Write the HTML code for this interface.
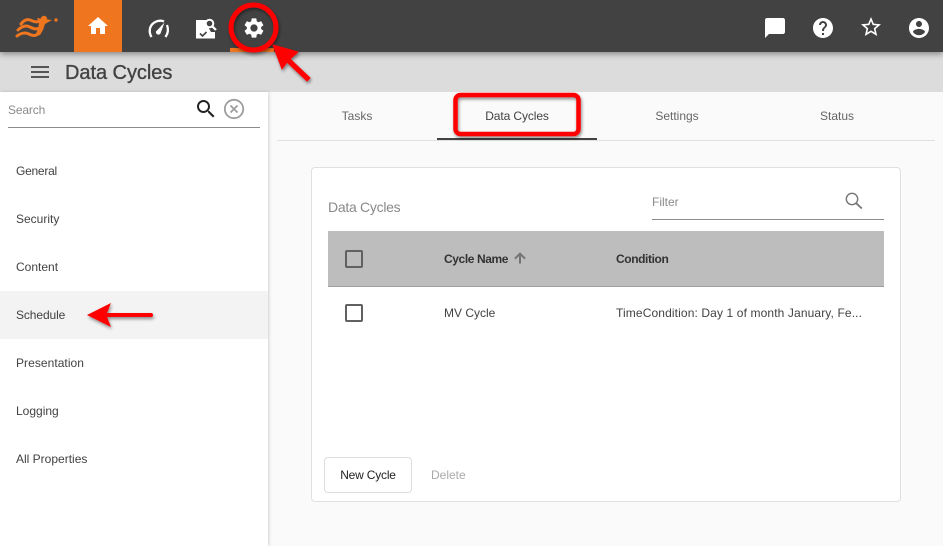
<!DOCTYPE html>
<html><head><meta charset="utf-8"><style>
html,body{margin:0;padding:0}
body{width:943px;height:546px;position:relative;overflow:hidden;background:#fafafa;font-family:"Liberation Sans",sans-serif;font-size:12px;color:#424242}
.a{position:absolute}
.t{position:absolute;white-space:nowrap;line-height:16px}
svg.a{overflow:visible}
</style></head><body>
<div class="a" style="left:0;top:52px;width:943px;height:40px;background:#dcdcdc"></div>
<div class="a" style="left:0;top:92px;width:268px;height:454px;background:#fff;box-shadow:1px 0 3px rgba(0,0,0,.16)"></div>
<div class="a" style="left:0;top:291px;width:268px;height:48px;background:#f3f3f3"></div>
<div class="a" style="left:0;top:0;width:943px;height:52px;background:#424242;box-shadow:0 2px 6px rgba(0,0,0,.4)"></div>
<div class="a" style="left:74px;top:0;width:48px;height:52px;background:#ef751f"></div>
<div class="a" style="left:230px;top:48px;width:44px;height:4px;background:#ef751f"></div>

<svg class="a" style="left:0;top:0" width="70" height="44" viewBox="0 0 70 44"><g fill="none" stroke="#ef751f" stroke-width="3" stroke-linecap="round"><path d="M21 24c3-4 6-5 9-4s6 3 10 1"/><path d="M18 30c4-4 8-5 12-3s7 3 11 0"/><path d="M17 36c4-3 8-4 12-2s6 2 9 0"/></g><path d="M37 18l6 1 9 1-7 4-2 6-3 5-5 1 3-7 1-6z" fill="#ef751f"/><circle cx="44" cy="19" r="3.200" fill="#ef751f"/><circle cx="56" cy="20" r="1.700" fill="#ef751f"/></svg>

<svg class="a" style="left:86px;top:14px" width="24" height="24" viewBox="0 0 24 24" fill="#fff"><path d="M10 20v-6h4v6h5v-8h3L12 3 2 12h3v8z"/></svg>
<svg class="a" style="left:146px;top:16px" width="24" height="24" viewBox="0 0 24 24"><path d="M5.500 21C3 17 3 11.500 6.500 8S15 4 18 5.500" fill="none" stroke="#fff" stroke-width="2.300"/><path d="M21 9c1.500 4 1 8.500-1.500 12" fill="none" stroke="#fff" stroke-width="2.300"/><path d="M18.500 6.500L14.500 17.500a2.500 2.500 0 0 1-4.500-2z" fill="#fff"/></svg>
<svg class="a" style="left:195px;top:18px" width="22" height="22" viewBox="0 0 22 22"><path d="M1 2h11v5l4 7 4 0v6.500H1z" fill="#fff"/><circle cx="14.500" cy="5.500" r="3.800" fill="#424242" stroke="#fff" stroke-width="2"/><path d="M17.300 8.300l3.700 3.700" stroke="#fff" stroke-width="2.200"/><path d="M5 15.500l2.500 2.500 4-4" fill="none" stroke="#424242" stroke-width="1.600"/></svg>
<svg class="a" style="left:242px;top:16px" width="24" height="24" viewBox="0 0 24 24" fill="#fff"><path d="M19.140 12.940c.04-.3.06-.61.06-.94 0-.32-.02-.64-.07-.94l2.030-1.580c.18-.14.230-.41.120-.61l-1.920-3.320c-.12-.22-.37-.29-.59-.22l-2.390.96c-.5-.38-1.030-.7-1.620-.94l-.36-2.540c-.04-.24-.24-.41-.48-.41h-3.840c-.24 0-.43.170-.47.410l-.36 2.540c-.59.24-1.130.57-1.620.94l-2.390-.96c-.22-.08-.47 0-.59.220L2.740 8.870c-.12.210-.08.470.120.610l2.030 1.580c-.05.3-.09.630-.09.940s.02.640.07.940l-2.030 1.580c-.18.140-.23.410-.12.610l1.920 3.320c.12.220.37.290.59.220l2.390-.96c.5.380 1.030.7 1.620.94l.36 2.540c.05.240.24.410.48.410h3.840c.24 0 .44-.17.47-.41l.36-2.540c.59-.24 1.130-.56 1.620-.94l2.390.96c.22.080.47 0 .59-.22l1.920-3.320c.12-.22.070-.47-.12-.61l-2.010-1.580zM12 15.600c-1.980 0-3.600-1.620-3.600-3.600s1.620-3.600 3.600-3.600 3.600 1.620 3.600 3.600-1.620 3.600-3.600 3.600z"/></svg>

<svg class="a" style="left:763px;top:16px" width="24" height="24" viewBox="0 0 24 24" fill="#fff"><path d="M20 2H4c-1.100 0-2 .9-2 2v18l4-4h14c1.100 0 2-.9 2-2V4c0-1.100-.9-2-2-2z"/></svg>
<svg class="a" style="left:811px;top:16px" width="24" height="24" viewBox="0 0 24 24" fill="#fff"><path d="M12 2C6.480 2 2 6.480 2 12s4.480 10 10 10 10-4.480 10-10S17.520 2 12 2zm1 17h-2v-2h2v2zm2.070-7.750l-.9.920C13.450 12.900 13 13.500 13 15h-2v-.5c0-1.100.45-2.100 1.170-2.830l1.240-1.260c.37-.36.590-.86.590-1.410 0-1.100-.9-2-2-2s-2 .9-2 2H8c0-2.210 1.790-4 4-4s4 1.790 4 4c0 .88-.36 1.680-.93 2.250z"/></svg>
<svg class="a" style="left:859px;top:15px" width="24" height="24" viewBox="0 0 24 24" fill="#fff"><path d="M22 9.240l-7.190-.62L12 2 9.190 8.630 2 9.240l5.460 4.730L5.820 21 12 17.270 18.180 21l-1.630-7.030L22 9.240zM12 15.400l-3.760 2.270 1-4.280-3.320-2.880 4.380-.38L12 6.100l1.710 4.040 4.380.38-3.320 2.880 1 4.280L12 15.400z"/></svg>
<svg class="a" style="left:907px;top:16px" width="24" height="24" viewBox="0 0 24 24" fill="#fff"><path d="M12 2C6.480 2 2 6.480 2 12s4.480 10 10 10 10-4.480 10-10S17.520 2 12 2zm0 3c1.660 0 3 1.340 3 3s-1.340 3-3 3-3-1.340-3-3 1.340-3 3-3zm0 14.200c-2.500 0-4.710-1.280-6-3.220.03-1.990 4-3.080 6-3.080 1.990 0 5.970 1.090 6 3.080-1.290 1.940-3.500 3.220-6 3.220z"/></svg>

<div class="a" style="left:31px;top:66px;width:18px;height:2px;background:#555"></div>
<div class="a" style="left:31px;top:71px;width:18px;height:2px;background:#555"></div>
<div class="a" style="left:31px;top:76px;width:18px;height:2px;background:#555"></div>
<div class="t" style="left:65px;top:61px;font-size:20px;line-height:24px;color:#424242;-webkit-text-stroke:.35px #424242;letter-spacing:-.05px">Data Cycles</div>

<div class="t" style="left:8px;top:102px;color:#8a8a8a;letter-spacing:-.15px">Search</div>
<svg class="a" style="left:194px;top:97px" width="24" height="24" viewBox="0 0 24 24" fill="#222"><path d="M15.500 14h-.79l-.28-.27C15.410 12.590 16 11.110 16 9.500 16 5.910 13.090 3 9.500 3S3 5.910 3 9.500 5.910 16 9.500 16c1.610 0 3.090-.59 4.230-1.570l.27.280v.79l5 4.990L20.490 19l-4.990-5zm-6 0C7.010 14 5 11.990 5 9.500S7.010 5 9.500 5 14 7.010 14 9.500 11.990 14 9.500 14z"/></svg>
<svg class="a" style="left:223px;top:98px" width="22" height="22" viewBox="0 0 22 22" fill="none" stroke="#9e9e9e"><circle cx="11" cy="11" r="9.200" stroke-width="1.800"/><path d="M7.500 7.500l7 7M14.500 7.500l-7 7" stroke-width="1.800"/></svg>
<div class="a" style="left:8px;top:127px;width:252px;height:1px;background:#8c8c8c"></div>

<div class="t" style="left:16px;top:163px;letter-spacing:-.25px">General</div>
<div class="t" style="left:16px;top:211px">Security</div>
<div class="t" style="left:16px;top:259px">Content</div>
<div class="t" style="left:16px;top:307px;letter-spacing:-.1px">Schedule</div>
<div class="t" style="left:16px;top:355px;letter-spacing:.05px">Presentation</div>
<div class="t" style="left:16px;top:403px">Logging</div>
<div class="t" style="left:16px;top:451px">All Properties</div>

<div class="a" style="left:277px;top:140px;width:658px;height:1px;background:#e0e0e0"></div>
<div class="a" style="left:437px;top:138px;width:160px;height:2px;background:#424242"></div>
<div class="t" style="left:277px;width:160px;top:108px;text-align:center;color:#666">Tasks</div>
<div class="t" style="left:437px;width:160px;top:108px;text-align:center;color:#424242;letter-spacing:-.1px">Data Cycles</div>
<div class="t" style="left:597px;width:160px;top:108px;text-align:center;color:#666">Settings</div>
<div class="t" style="left:757px;width:160px;top:108px;text-align:center;color:#666">Status</div>

<div class="a" style="left:311px;top:167px;width:588px;height:333px;background:#fff;border:1px solid #e0e0e0;border-radius:4px"></div>
<div class="t" style="left:328px;top:199px;font-size:14px;color:#8a8a8a;letter-spacing:-.28px">Data Cycles</div>
<div class="t" style="left:652px;top:194px;color:#8a8a8a">Filter</div>
<svg class="a" style="left:840px;top:187px" width="24" height="24" viewBox="0 0 24 24" fill="none" stroke="#757575"><circle cx="12" cy="12" r="5.700" stroke-width="1.400"/><path d="M16.200 16.200l5.600 5.300" stroke-width="1.800"/></svg>
<div class="a" style="left:652px;top:219px;width:232px;height:1px;background:#8c8c8c"></div>

<div class="a" style="left:328px;top:231px;width:556px;height:55px;background:#bdbdbd;border-bottom:1px solid #9e9e9e"></div>
<div class="a" style="left:345px;top:250px;width:14px;height:14px;border:2px solid #616161;border-radius:2px"></div>
<div class="t" style="left:444px;top:251px;font-weight:700;color:#333;letter-spacing:-.4px">Cycle Name</div>
<svg class="a" style="left:512px;top:250px" width="16" height="16" viewBox="0 0 24 24" fill="#757575"><path d="M4 12l1.410 1.410L11 7.830V20h2V7.830l5.580 5.590L20 12l-8-8-8 8z" stroke="#757575" stroke-width="1"/></svg>
<div class="t" style="left:616px;top:251px;font-weight:700;color:#333;letter-spacing:-.4px">Condition</div>
<div class="a" style="left:345px;top:304px;width:14px;height:14px;border:2px solid #616161;border-radius:2px"></div>
<div class="t" style="left:444px;top:305px">MV Cycle</div>
<div class="t" style="left:616px;top:305px;letter-spacing:.12px">TimeCondition: Day 1 of month January, Fe...</div>

<div class="a" style="left:324px;top:457px;width:86px;height:34px;background:#fff;border:1px solid #ddd;border-radius:4px"></div>
<div class="t" style="left:324px;width:88px;text-align:center;top:467px;color:#222;letter-spacing:-.2px">New Cycle</div>
<div class="t" style="left:431px;top:467px;color:#aaa">Delete</div>

<svg class="a" style="left:0;top:0" width="943" height="546">
<defs><filter id="s" x="-20%" y="-20%" width="150%" height="150%"><feDropShadow dx="1" dy="2" stdDeviation="1.500" flood-color="#000" flood-opacity=".45"/></filter></defs>
<g filter="url(#s)">
<circle cx="253.500" cy="27.500" r="22.500" fill="none" stroke="#f00" stroke-width="5"/>
<path d="M273 45L298 52 290 59 310 78 307 81 287 62 282 69z" fill="#f00" stroke="#f00" stroke-linejoin="round"/>
<rect x="455.500" y="95" width="123" height="39" rx="5" fill="none" stroke="#f00" stroke-width="4.500"/>
<path d="M87 315L111 303 107 313H151a2 2 0 0 1 0 4H107L111 327z" fill="#f00"/>
</g>
</svg>
</body></html>
